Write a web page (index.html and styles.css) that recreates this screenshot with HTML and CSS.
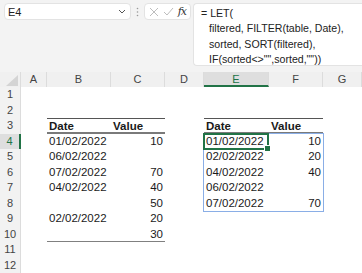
FILE: index.html
```html
<!DOCTYPE html>
<html lang="en">
<head>
    <meta charset="UTF-8">
    <title>LET FILTER SORT</title>
    <link rel="stylesheet" href="styles.css">
</head>
<body>
    <!-- name box + formula bar -->
    <div class="toolbar">
        <div class="namebox">
            <span>E4</span>
            <svg width="8" height="5" viewBox="0 0 8 5"><path d="M1 1 L4 4 L7 1" fill="none" stroke="#555" stroke-width="1"/></svg>
        </div>
        <div class="dots">
            <svg width="3" height="10" viewBox="0 0 3 10"><circle cx="1.5" cy="1.5" r="0.8" fill="#999"/><circle cx="1.5" cy="5" r="0.8" fill="#999"/><circle cx="1.5" cy="8.5" r="0.8" fill="#999"/></svg>
        </div>
        <div class="fbtns">
            <svg width="10" height="10" viewBox="0 0 10 10"><path d="M1 1 L9 9 M9 1 L1 9" stroke="#bdbdbd" stroke-width="1"/></svg>
            <svg width="11" height="9" viewBox="0 0 11 9"><path d="M1 5 L4 8 L10 1" fill="none" stroke="#bdbdbd" stroke-width="1"/></svg>
            <span class="fx">fx</span>
        </div>
        <div class="formula">
            <div>= LET(</div>
            <div class="ind">filtered, FILTER(table, Date),</div>
            <div class="ind">sorted, SORT(filtered),</div>
            <div class="ind">IF(sorted&lt;&gt;"",sorted,""))</div>
        </div>
    </div>

    <!-- sheet -->
    <div class="sheet">
        <div class="row head">
            <span class="corner"><svg width="12" height="11" viewBox="0 0 12 11"><path d="M12 0 L12 11 L0 11 Z" fill="#d4d4d4"/></svg></span>
            <span>A</span><span>B</span><span>C</span><span>D</span><span class="sel">E</span><span>F</span><span>G</span>
        </div>
        <div class="row"><span class="rh">1</span><span></span><span></span><span></span><span></span><span></span><span></span><span></span></div>
        <div class="row"><span class="rh">2</span><span></span><span></span><span></span><span></span><span></span><span></span><span></span></div>
        <div class="row"><span class="rh">3</span><span></span><span class="th">Date</span><span class="th">Value</span><span></span><span class="th">Date</span><span class="th">Value</span><span></span></div>
        <div class="row"><span class="rh sel">4</span><span></span><span>01/02/2022</span><span class="num">10</span><span></span><span>01/02/2022</span><span class="num">10</span><span></span></div>
        <div class="row"><span class="rh">5</span><span></span><span>06/02/2022</span><span class="num"></span><span></span><span>02/02/2022</span><span class="num">20</span><span></span></div>
        <div class="row"><span class="rh">6</span><span></span><span>07/02/2022</span><span class="num">70</span><span></span><span>04/02/2022</span><span class="num">40</span><span></span></div>
        <div class="row"><span class="rh">7</span><span></span><span>04/02/2022</span><span class="num">40</span><span></span><span>06/02/2022</span><span class="num"></span><span></span></div>
        <div class="row"><span class="rh">8</span><span></span><span></span><span class="num">50</span><span></span><span>07/02/2022</span><span class="num">70</span><span></span></div>
        <div class="row"><span class="rh">9</span><span></span><span>02/02/2022</span><span class="num">20</span><span></span><span></span><span></span><span></span></div>
        <div class="row"><span class="rh">10</span><span></span><span class="last"></span><span class="num last">30</span><span></span><span></span><span></span><span></span></div>
        <div class="row"><span class="rh">11</span><span></span><span></span><span></span><span></span><span></span><span></span><span></span></div>
        <div class="row"><span class="rh">12</span><span></span><span></span><span></span><span></span><span></span><span></span><span></span></div>

        <!-- spill range + active cell -->
        <div class="spill"></div>
        <div class="active"><i></i></div>
    </div>
</body>
</html>
```

FILE: styles.css
```css
body {
    margin: 0;
    width: 362px;
    height: 273px;
    overflow: hidden;
    font-family: "Liberation Sans", Arial, sans-serif;
    background: #fff;
}

/* top bar */
.toolbar {
    height: 72px;
    box-sizing: border-box;
    background: #f3f3f3;
    display: flex;
    align-items: flex-start;
    padding: 3px 0 0 4px;
}

.namebox {
    width: 127px;
    height: 17px;
    box-sizing: border-box;
    background: #fff;
    border: 1px solid #e3e3e3;
    border-radius: 4px;
    display: flex;
    align-items: center;
    justify-content: space-between;
    padding: 0 4px 0 3px;
    font-size: 11px;
    color: #222;
}

.dots {
    width: 13px;
    height: 17px;
    display: flex;
    align-items: center;
    justify-content: center;
}

.fbtns {
    width: 47px;
    height: 17px;
    box-sizing: border-box;
    background: #fff;
    border: 1px solid #e3e3e3;
    border-radius: 4px;
    display: flex;
    align-items: center;
    justify-content: space-around;
    padding: 0 2px;
}

.fx {
    font-family: "DejaVu Serif", "Liberation Serif", serif;
    font-style: italic;
    font-size: 11px;
    color: #333;
    letter-spacing: -1px;
}

.formula {
    flex: 1;
    height: 63px;
    margin-left: 2px;
    box-sizing: border-box;
    background: #fff;
    border: 1px solid #e3e3e3;
    border-right: none;
    border-radius: 4px 0 0 4px;
    padding: 2px 0 0 7px;
    font-size: 10.6px;
    line-height: 15.4px;
    color: #222;
    white-space: nowrap;
}

.formula .ind {
    padding-left: 8px;
}

/* grid */
.sheet {
    position: relative;
}

.row {
    display: grid;
    grid-template-columns: 21px 26px 64px 54px 39px 65px 54px 39px;
    height: 15.5px;
    font-size: 11.5px;
    line-height: 15.5px;
    color: #1a1a1a;
}

.row span {
    box-sizing: border-box;
    padding: 0 2px;
    white-space: nowrap;
    overflow: hidden;
}

.row.head {
    height: 15px;
    line-height: 15px;
    background: #f0f0f0;
    font-size: 11px;
    color: #444;
}

.row.head span {
    text-align: center;
    border-right: 1px solid #dcdcdc;
}

.row.head .corner {
    display: flex;
    align-items: flex-end;
    justify-content: flex-end;
    padding: 0 2px 1px 0;
}

.row.head .sel {
    background: #dedede;
    color: #217346;
    border-bottom: 2px solid #217346;
}

.rh {
    background: #f2f2f2;
    border-right: 1px solid #dcdcdc;
    text-align: center;
    font-size: 11px;
    color: #444;
}

.rh.sel {
    background: #dedede;
    color: #217346;
    border-right: 2px solid #217346;
}

.th {
    font-weight: bold;
    border-top: 1.5px solid #555;
    border-bottom: 2px solid #7a7a7a;
    line-height: 13px;
    padding-top: 1px !important;
}

.num {
    text-align: right;
}

.last {
    border-bottom: 1.5px solid #808080;
}

/* overlays */
.spill {
    position: absolute;
    left: 203px;
    top: 61px;
    width: 121px;
    height: 79px;
    box-sizing: border-box;
    border: 1px solid #8aaee6;
}

.active {
    position: absolute;
    left: 203px;
    top: 61px;
    width: 66px;
    height: 17px;
    box-sizing: border-box;
    border: 2px solid #217346;
}

.active i {
    position: absolute;
    right: -4px;
    bottom: -4px;
    width: 5px;
    height: 5px;
    background: #217346;
    border: 1px solid #fff;
}
```
